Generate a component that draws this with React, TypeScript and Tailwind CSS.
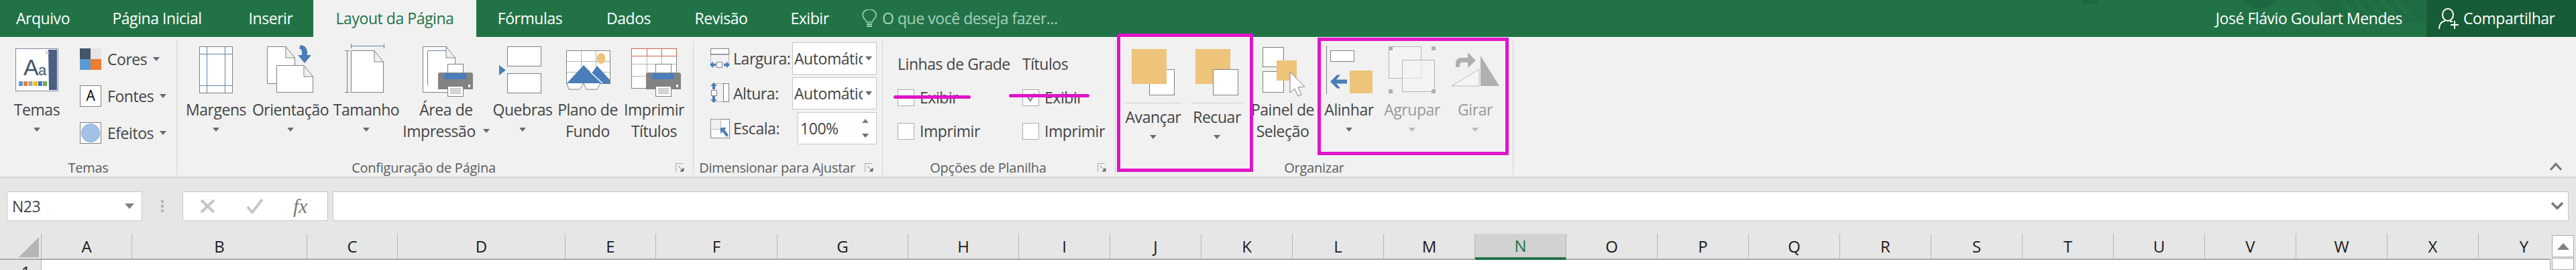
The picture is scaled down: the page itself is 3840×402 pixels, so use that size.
import type { ReactNode } from "react";

const ORANGE = "#eec47a";
const BLUE = "#4a7eb8";
const LINE = "#808080";

// svg whose viewBox uses page coordinates, so shapes can be read straight off the screenshot
function Art({ x, w, y = 62, h = 85, children }: { x: number; w: number; y?: number; h?: number; children: ReactNode }) {
  return (
    <svg width={w} height={h} viewBox={`${x} ${y} ${w} ${h}`} className="block shrink-0">
      {children}
    </svg>
  );
}

function Caret({ muted }: { muted?: boolean }) {
  return (
    <svg width="10" height="6" viewBox="0 0 10 6" className="block">
      <path d="M0 0h10L5 6z" fill={muted ? "#b8b8b8" : "#6b6b6b"} />
    </svg>
  );
}

function BigButton({
  className,
  art,
  lines,
  caret = "below",
  muted,
}: {
  className: string;
  art: ReactNode;
  lines: string[];
  caret?: "below" | "inline" | "none";
  muted?: boolean;
}) {
  return (
    <div className={`flex shrink-0 flex-col items-center ${className}`}>
      {art}
      <div className={`text-center leading-[32px] whitespace-nowrap ${muted ? "text-[#9a9a9a]" : ""}`}>
        {lines.map((l, i) => (
          <div key={l} className="flex items-center justify-center gap-[11px]">
            {l}
            {caret === "inline" && i === lines.length - 1 && <Caret />}
          </div>
        ))}
      </div>
      {caret === "below" && (
        <div className="flex h-[28px] items-center">
          <Caret muted={muted} />
        </div>
      )}
    </div>
  );
}

function Fold({ x, y, w, h, f = 14 }: { x: number; y: number; w: number; h: number; f?: number }) {
  return (
    <path
      d={`M${x + 0.5} ${y + 0.5}H${x + w - f}L${x + w - 0.5} ${y + f + 3}V${y + h - 0.5}H${x + 0.5}zM${x + w - f} ${y + 0.5}V${y + f + 3}H${x + w - 0.5}`}
      fill="#fff"
      stroke={LINE}
    />
  );
}

function Printer({ x }: { x: number }) {
  return (
    <g>
      <rect x={x + 14.5} y="95.5" width="23" height="20" fill="#fff" stroke={LINE} />
      <path d={`M${x + 3} 108h46a3 3 0 0 1 3 3v22H${x}v-22a3 3 0 0 1 3-3z`} fill="#828282" />
      <rect x={x + 9} y="109" width="33" height="9" fill={BLUE} />
      <rect x={x + 45} y="126" width="3" height="4" fill="#fff" />
      <rect x={x + 14.5} y="128.5" width="23" height="15" fill="#fff" stroke={LINE} />
      <path d={`M${x + 18} 132.5h16M${x + 18} 135.5h16M${x + 18} 138.5h16`} stroke={LINE} />
    </g>
  );
}

function Launcher() {
  return (
    <svg width="13" height="14" viewBox="0 0 13 14" className="absolute right-[13px] bottom-[3px]">
      <path d="M.5 13V.5H11" fill="none" stroke="#a6a6a6" />
      <path d="M4 4l6 6M12 7v5H7z" stroke="#6e6e6e" fill="#6e6e6e" />
    </svg>
  );
}

function Group({
  className,
  label,
  labelClass,
  launcher,
  children,
}: {
  className: string;
  label: string;
  labelClass?: string;
  launcher?: boolean;
  children: ReactNode;
}) {
  return (
    <div className={`relative flex h-[200px] shrink-0 flex-col border-r border-[#d4d4d4] ${className}`}>
      <div className="flex min-h-0 flex-1">{children}</div>
      <div className={`h-[20px] text-center text-[20px] leading-[20px] tracking-[-0.25px] text-[#5c5c5c] ${labelClass ?? ""}`}>{label}</div>
      {launcher && <Launcher />}
    </div>
  );
}

function SmallRow({ icon, label }: { icon: ReactNode; label: string }) {
  return (
    <div className="flex h-[32px] items-center">
      {icon}
      <span className="ml-[9px]">{label}</span>
      <span className="ml-[9px]">
        <Caret />
      </span>
    </div>
  );
}

function SizeRow({ icon, label, box, value, spin }: { icon: ReactNode; label: string; box: string; value: string; spin?: boolean }) {
  return (
    <div className="flex h-[48px] w-[249px] items-center">
      {icon}
      <span className="ml-[5px] flex-1">{label}</span>
      <div className={`flex h-full items-center border border-[#c6c6c6] bg-white ${box}`}>
        <span className={spin ? "ml-[3px] flex-1" : "ml-[2px] w-[102px] overflow-hidden whitespace-nowrap"}>{value}</span>
        {spin ? (
          <div className="mr-[11px] flex flex-col gap-[16px]">
            <svg width="10" height="6" viewBox="0 0 10 6"><path d="M5 0l5 6H0z" fill="#808080" /></svg>
            <Caret />
          </div>
        ) : (
          <span className="ml-[4px]">
            <Caret />
          </span>
        )}
      </div>
    </div>
  );
}

function Check({ label, checked }: { label: string; checked?: boolean }) {
  return (
    <div className="flex h-[32px] items-center gap-[8px]">
      <div className="flex h-[25px] w-[25px] items-center justify-center border border-[#ababab] bg-white">
        {checked && (
          <svg width="14" height="14" viewBox="0 0 14 14">
            <path d="M2 7l4 5 6-11" fill="none" stroke="#8a8a8a" strokeWidth="2.5" />
          </svg>
        )}
      </div>
      <span>{label}</span>
    </div>
  );
}

const tabs = [
  { name: "Arquivo", w: "w-[128px]" },
  { name: "Página Inicial", w: "w-[212px]" },
  { name: "Inserir", w: "w-[127px]" },
  { name: "Layout da Página", w: "w-[243px] bg-[#f1f1f1] text-[#217346]" },
  { name: "Fórmulas", w: "w-[160px]" },
  { name: "Dados", w: "w-[134px]" },
  { name: "Revisão", w: "w-[142px]" },
  { name: "Exibir", w: "w-[122px]" },
];

const columns = [
  { name: "A", w: "w-[135px]" },
  { name: "B", w: "w-[261px]" },
  { name: "C", w: "w-[135px]" },
  { name: "D", w: "w-[250px]" },
  { name: "E", w: "w-[135px]" },
  { name: "F", w: "w-[181px]" },
  { name: "G", w: "w-[195px]" },
  { name: "H", w: "w-[165px]" },
  ..."IJKLMNOPQRSTUVWXY".split("").map((name) => ({ name, w: "w-[136px]" })),
];

export default function App() {
  return (
    <div className="relative flex h-[402px] w-[3840px] flex-col overflow-hidden bg-[#e6e6e6] font-['Open_Sans',sans-serif] text-[23px] tracking-[-0.45px] text-[#444]">
      {/* title tabs */}
      <div className="relative flex h-[55px] shrink-0 items-center bg-[#217346] text-[23px] text-white">
        <svg width="520" height="36" viewBox="3100 0 520 36" className="absolute top-0 left-[3100px]">
          <rect x="3103" width="24" height="5" fill="#1d6840" />
          <circle cx="3368" cy="-20" r="33" fill="#1d6840" />
          <path d="M3448 0L3480 34H3610a6 6 0 0 0 6-6V0z" fill="#1f6c42" />
          <path d="M3490 0l24 26M3510 0l24 26M3530 0l24 26M3550 0l24 26M3570 0l24 26" stroke="#217346" strokeWidth="6" />
        </svg>
        {tabs.map((t) => (
          <div key={t.name} className={`relative flex h-full items-center justify-center ${t.w}`}>
            {t.name}
          </div>
        ))}
        <div className="relative ml-[17px] flex items-center text-[#a9d0bb]">
          <svg width="22" height="28" viewBox="0 0 22 28" className="mr-[8px]">
            <path d="M7 19c0-3-6-5-6-11a10 8 0 0 1 20 0c0 6-6 8-6 11z" fill="none" stroke="#a9d0bb" strokeWidth="1.5" />
            <path d="M7 22h8M7 25h8" stroke="#a9d0bb" strokeWidth="2" />
          </svg>
          O que você deseja fazer...
        </div>
        <div className="relative ml-auto mr-[36px]">José Flávio Goulart Mendes</div>
        <div className="relative flex h-full w-[223px] items-center bg-[#185c37] pl-[18px]">
          <svg width="30" height="32" viewBox="0 0 30 32" className="mr-[7px]">
            <ellipse cx="14" cy="10" rx="8" ry="9" fill="none" stroke="#fff" strokeWidth="2" />
            <path d="M1 31c0-7 4-11 9-12M17 20h4" fill="none" stroke="#fff" strokeWidth="2" />
            <path d="M24 19v12M18 25h12" stroke="#fff" strokeWidth="2" />
          </svg>
          Compartilhar
        </div>
      </div>

      {/* ribbon */}
      <div className="relative flex h-[210px] shrink-0 border-b-2 border-[#d4d4d4] bg-[#f1f1f1] pt-[5px]">
        <Group className="w-[264px]" label="Temas">
          <div className="flex pt-[2px]">
            <BigButton
              className="w-[110px]"
              art={
                <Art x={0} w={110}>
                  <rect x="23.5" y="72.5" width="63" height="63" fill="#fff" stroke="#7d8a9c" />
                  <path d="M72 74h13v60H73z" fill="#4a5f82" />
                  <path d="M68 74l6 6h-6z" fill="#d0d0d0" />
                  <text x="35" y="112" fontSize="34" fill="#44546a" fontFamily="Liberation Sans">A</text>
                  <text x="57" y="112" fontSize="22" fill="#44546a" fontFamily="Liberation Sans">a</text>
                  {["#5b9bd5", "#ed7d31", "#a5a5a5", "#ffc000", "#4472c4", "#70ad47"].map((c, i) => (
                    <rect key={c} x={28 + i * 7.2} y="121" width="6" height="7" fill={c} />
                  ))}
                </Art>
              }
              lines={["Temas"]}
            />
            <div className="ml-[9px] flex flex-col gap-[23px] pt-[10px]">
              <SmallRow
                label="Cores"
                icon={
                  <div className="grid h-[32px] w-[32px] grid-cols-2 grid-rows-2">
                    <div className="bg-[#44546a]" />
                    <div className="bg-[#e7e6e6]" />
                    <div className="bg-[#5b9bd5]" />
                    <div className="bg-[#ed7d31]" />
                  </div>
                }
              />
              <SmallRow
                label="Fontes"
                icon={
                  <div className="flex h-[32px] w-[32px] items-center justify-center border border-[#808080] bg-white text-[21px] text-black">A</div>
                }
              />
              <SmallRow
                label="Efeitos"
                icon={
                  <div className="flex h-[32px] w-[32px] items-center justify-center border border-[#808080] bg-white">
                    <div className="h-[28px] w-[28px] rounded-full border border-[#7fa6d6] bg-[#a3c1e6]" />
                  </div>
                }
              />
            </div>
          </div>
        </Group>

        <Group className="w-[770px]" label="Configuração de Página" labelClass="pr-[34px]" launcher>
          <div className="flex pt-[2px] pl-[8px]">
            <BigButton
              className="w-[100px]"
              lines={["Margens"]}
              art={
                <Art x={272} w={100}>
                  <rect x="297.5" y="69.5" width="49" height="69" fill="#fff" stroke={LINE} />
                  <path d="M308.5 70v68M335.5 70v68M298 80.5h48M298 127.5h48" stroke="#5f84ab" />
                </Art>
              }
            />
            <BigButton
              className="w-[122px]"
              lines={["Orientação"]}
              art={
                <Art x={372} w={122}>
                  <Fold x={398} y={69} w={42} h={56} />
                  <Fold x={412} y={97} w={55} h={41} />
                  <path d="M448 67c7 1 10 5 10 11v4h6l-10 12-10-12h6v-3c0-4-1-6-4-7z" fill={BLUE} />
                </Art>
              }
            />
            <BigButton
              className="w-[104px]"
              lines={["Tamanho"]}
              art={
                <Art x={494} w={104}>
                  <Fold x={523} y={75} w={49} h={63} />
                  <path d="M523.5 65v7M572.5 65v7M523 68.5h49M514 75.5h7M514 137.5h7M517.5 75v63" stroke="#5f84ab" />
                </Art>
              }
            />
            <BigButton
              className="w-[134px]"
              lines={["Área de", "Impressão"]}
              caret="inline"
              art={
                <Art x={598} w={134}>
                  <Fold x={630} y={69} w={49} h={69} />
                  <path d="M637.5 127V75.5H665" fill="none" stroke="#5f84ab" />
                  <Printer x={653} />
                </Art>
              }
            />
            <BigButton
              className="w-[94px]"
              lines={["Quebras"]}
              art={
                <Art x={732} w={94}>
                  <rect x="756.5" y="69.5" width="50" height="29" fill="#fff" stroke={LINE} />
                  <rect x="756.5" y="109.5" width="50" height="29" fill="#fff" stroke={LINE} />
                  <path d="M744 97l10 7.5-10 7.5z" fill={BLUE} />
                </Art>
              }
            />
            <BigButton
              className="w-[100px]"
              lines={["Plano de", "Fundo"]}
              caret="none"
              art={
                <Art x={826} w={100}>
                  <rect x="844.5" y="75.5" width="65" height="49" fill="#fff" stroke={LINE} />
                  <path d="M866.5 76v48M888.5 76v48M845 91.5h64M845 107.5h64" stroke="#b5b5b5" />
                  <ellipse cx="896" cy="87" rx="6.5" ry="8" fill={ORANGE} />
                  <path d="M845 124l25-27 12 12 8-11 20 22v4z" fill={BLUE} />
                  <path d="M880 107l18 17" stroke="#fff" strokeWidth="1.5" />
                  <path d="M845 124l3 9h16l6-9M870 124l4 9h16l5-9" fill="#fff" stroke={LINE} />
                </Art>
              }
            />
            <BigButton
              className="w-[98px]"
              lines={["Imprimir", "Títulos"]}
              caret="none"
              art={
                <Art x={926} w={98}>
                  <rect x="941.5" y="72.5" width="67" height="59" fill="#fff" stroke={LINE} />
                  <path d="M964.5 73v59M986.5 73v59M942 95.5h66M942 113.5h66" stroke="#b5b5b5" />
                  <path d="M941.5 83.5V72.5H1008.5V83.5H941.5M964.5 73v10M986.5 73v10" fill="none" stroke="#c8654b" />
                  <Printer x={963} />
                </Art>
              }
            />
          </div>
        </Group>

        <Group className="w-[282px]" label="Dimensionar para Ajustar" labelClass="pr-[32px]" launcher>
          <div className="flex flex-col gap-[4px] pt-[3px] pl-[24px]">
            <SizeRow
              label="Largura:"
              box="w-[126px]"
              value="Automático"
              icon={
                <Art x={1058} w={30} y={70} h={36}>
                  <rect x="1059.5" y="73.5" width="27" height="8" fill="#fff" stroke={LINE} />
                  <path d="M1059.5 82v16M1086.5 82v16M1060 82.5h26" stroke={LINE} strokeDasharray="1.5 1.5" fill="none" />
                  <rect x="1068.5" y="93.5" width="8" height="8" fill="#fff" stroke={LINE} />
                  <path d="M1058 97.5l5-5v3h4v4h-4v3zM1088 97.5l-5-5v3h-4v4h4v3z" fill={BLUE} />
                </Art>
              }
            />
            <SizeRow
              label="Altura:"
              box="w-[126px]"
              value="Automático"
              icon={
                <Art x={1058} w={30} y={122} h={36}>
                  <rect x="1078.5" y="125.5" width="8" height="27" fill="#fff" stroke={LINE} />
                  <path d="M1062 125.5h16M1062 152.5h16" stroke={LINE} strokeDasharray="1.5 1.5" />
                  <rect x="1060.5" y="135.5" width="8" height="8" fill="#fff" stroke={LINE} />
                  <path d="M1064 124l5 5h-3v5h-4v-5h-3zM1064 154l5-5h-3v-5h-4v5h-3z" fill={BLUE} />
                </Art>
              }
            />
            <SizeRow
              label="Escala:"
              box="w-[118px]"
              value="100%"
              spin
              icon={
                <Art x={1058} w={30} y={175} h={32}>
                  <rect x="1059.5" y="177.5" width="28" height="28" fill="#fff" stroke={LINE} />
                  <rect x="1059.5" y="177.5" width="15" height="15" fill="#f1f1f1" stroke={LINE} strokeDasharray="1.5 1.5" />
                  <path d="M1074 190h9l-3 3 6 8-3 3-6-8-3 3z" fill={BLUE} />
                </Art>
              }
            />
          </div>
        </Group>

        <Group className="w-[347px]" label="Opções de Planilha" labelClass="pr-[32px]" launcher>
          <div className="flex pt-[19px] pl-[22px]">
            <div className="flex w-[186px] flex-col gap-[18px]">
              <div className="leading-[32px]">Linhas de Grade</div>
              <Check label="Exibir" />
              <Check label="Imprimir" />
            </div>
            <div className="flex flex-col gap-[18px]">
              <div className="leading-[32px]">Títulos</div>
              <Check label="Exibir" checked />
              <Check label="Imprimir" />
            </div>
          </div>
        </Group>

        <Group className="w-[593px]" label="Organizar">
          <div className="flex pt-[2px] pl-[9px]">
            <BigButton
              className="w-[94px]"
              lines={["Avançar"]}
              art={
                <Art x={1672} w={94} h={96}>
                  <rect x="1713.5" y="103.5" width="37" height="38" fill="#fff" stroke={LINE} />
                  <rect x="1687" y="73" width="52" height="52" fill={ORANGE} />
                  <path d="M1678 153.5h83" stroke="#cfcfcf" />
                </Art>
              }
            />
            <BigButton
              className="w-[96px]"
              lines={["Recuar"]}
              art={
                <Art x={1766} w={96} h={96}>
                  <rect x="1782" y="73" width="52" height="52" fill={ORANGE} />
                  <rect x="1808.5" y="103.5" width="37" height="38" fill="#fff" stroke={LINE} />
                  <path d="M1775 153.5h78" stroke="#cfcfcf" />
                </Art>
              }
            />
            <BigButton
              className="w-[100px]"
              lines={["Painel de", "Seleção"]}
              caret="none"
              art={
                <Art x={1862} w={100}>
                  <rect x="1882.5" y="70.5" width="31" height="29" fill="#fff" stroke={LINE} />
                  <rect x="1882.5" y="106.5" width="31" height="31" fill="#fff" stroke={LINE} />
                  <rect x="1903" y="90" width="30" height="30" fill={ORANGE} />
                  <path d="M1923 107v31l7-6 5 11 5-2-5-11 10-1z" fill="#fff" stroke={LINE} />
                </Art>
              }
            />
            <BigButton
              className="w-[98px]"
              lines={["Alinhar"]}
              art={
                <Art x={1962} w={98}>
                  <path d="M1977.5 68v72" stroke={LINE} />
                  <rect x="1983.5" y="75.5" width="35" height="16" fill="#fff" stroke={LINE} />
                  <rect x="2012" y="105" width="34" height="34" fill={ORANGE} />
                  <path d="M1983 121.5l10-10h5l-6 7h16v6h-16l6 7h-5z" fill={BLUE} />
                </Art>
              }
            />
            <BigButton
              className="w-[90px]"
              lines={["Agrupar"]}
              muted
              art={
                <Art x={2060} w={90}>
                  <rect x="2070.5" y="69.5" width="48" height="47" fill="#f5f3f6" stroke="#b5b5b5" />
                  <rect x="2090.5" y="89.5" width="48" height="47" fill="#f5f3f6" stroke="#b5b5b5" fillOpacity="0.6" />
                  <path d="M2070 69h6v6h-6zM2134 69h6v6h-6zM2070 133h6v6h-6zM2134 133h6v6h-6z" fill="#b0b0b0" />
                </Art>
              }
            />
            <BigButton
              className="w-[98px]"
              lines={["Girar"]}
              muted
              art={
                <Art x={2150} w={98}>
                  <path d="M2170 100v-6c0-5 4-8 9-8h9v-8l12 12-12 11v-8h-8c-3 0-4 2-4 4v3z" fill="#b0b0b0" />
                  <path d="M2207 83l28 45h-28z" fill="#b0b0b0" />
                  <path d="M2205 103v25h-41z" fill="#f5f3f6" stroke="#bdbdbd" />
                </Art>
              }
            />
          </div>
        </Group>

        <svg width="18" height="12" viewBox="0 0 18 12" className="absolute top-[187px] right-[21px]">
          <path d="M1 11l8-9 8 9" fill="none" stroke="#777" strokeWidth="3" />
        </svg>
      </div>

      {/* formula bar */}
      <div className="flex h-[83px] shrink-0 items-start pt-[20px] pr-[11px] pl-[10px]">
        <div className="flex h-[44px] w-[202px] items-center justify-between border border-[#c6c6c6] bg-white pr-[11px] pl-[7px]">
          N23
          <svg width="14" height="8" viewBox="0 0 14 8"><path d="M0 0h14L7 8z" fill="#808080" /></svg>
        </div>
        <div className="flex h-[44px] w-[60px] flex-col items-center justify-center gap-[3px]">
          <div className="h-[4px] w-[4px] bg-[#b5b5b5]" />
          <div className="h-[4px] w-[4px] bg-[#b5b5b5]" />
          <div className="h-[4px] w-[4px] bg-[#b5b5b5]" />
        </div>
        <div className="flex h-[44px] w-[217px] items-center border border-[#c6c6c6] bg-white pl-[25px]">
          <svg width="24" height="22" viewBox="0 0 24 22"><path d="M2 2l19 18M21 2L2 20" stroke="#c6c6c6" strokeWidth="4" /></svg>
          <svg width="28" height="24" viewBox="0 0 28 24" className="ml-[44px]"><path d="M3 13l7 8L25 2" fill="none" stroke="#c6c6c6" strokeWidth="4" /></svg>
          <span className="ml-[43px] font-['Liberation_Serif',serif] text-[30px] italic leading-[30px] text-[#777]">fx</span>
        </div>
        <div className="ml-[7px] flex h-[44px] flex-1 items-center justify-end border border-[#c6c6c6] bg-white pr-[7px]">
          <svg width="18" height="12" viewBox="0 0 18 12"><path d="M1 1l8 8 8-8" fill="none" stroke="#777" strokeWidth="3.5" /></svg>
        </div>
      </div>

      {/* sheet */}
      <div className="flex min-h-0 flex-1">
        <div className="flex w-[3802px] flex-col overflow-hidden">
          <div className="flex h-[39px] shrink-0 border-b-2 border-[#ababab]">
            <div className="flex w-[62px] shrink-0 items-center justify-end border-r border-[#b5b5b5] pr-[3px]">
              <svg width="30" height="30" viewBox="0 0 30 30" className="mt-[2px]"><path d="M30 0v30H0z" fill="#b5b5b5" /></svg>
            </div>
            {columns.map((c) => (
              <div
                key={c.name}
                className={`flex shrink-0 items-center justify-center border-r border-[#b5b5b5] text-[24px] leading-none tracking-normal ${c.w} ${
                  c.name === "N" ? "-mb-[2px] border-b-[4px] border-b-[#217346] bg-[#d2d2d2] text-[#217346]" : "text-[#1a1a1a]"
                }`}
              >
                {c.name}
              </div>
            ))}
          </div>
          <div className="flex min-h-0 flex-1">
            <div className="w-[62px] shrink-0 border-r border-[#b5b5b5] pt-[3px] pr-[16px] text-right text-[24px] leading-[30px] text-[#1a1a1a]">1</div>
            <div className="flex-1 border-r border-[#ababab] bg-white" />
          </div>
        </div>
        <div className="flex flex-1 flex-col gap-[1px] pt-[2px] pr-[3px] pl-[2px]">
          <div className="flex h-[33px] shrink-0 items-center justify-center border border-[#ababab] bg-white">
            <svg width="18" height="10" viewBox="0 0 18 10"><path d="M9 0l9 10H0z" fill="#808080" /></svg>
          </div>
          <div className="flex-1 border border-[#ababab] bg-white" />
        </div>
      </div>

      {/* magenta marks drawn over the screenshot */}
      <div className="absolute top-[50px] left-[1665px] h-[206px] w-[203px] border-[5px] border-[#e014c8]" />
      <div className="absolute top-[56px] left-[1964px] h-[175px] w-[285px] border-[5px] border-[#e014c8]" />
      <div className="absolute top-[142px] left-[1332px] h-[5px] w-[115px] rounded-full bg-[#e014c8]" />
      <div className="absolute top-[140px] left-[1504px] h-[5px] w-[120px] rounded-full bg-[#e014c8]" />
    </div>
  );
}
